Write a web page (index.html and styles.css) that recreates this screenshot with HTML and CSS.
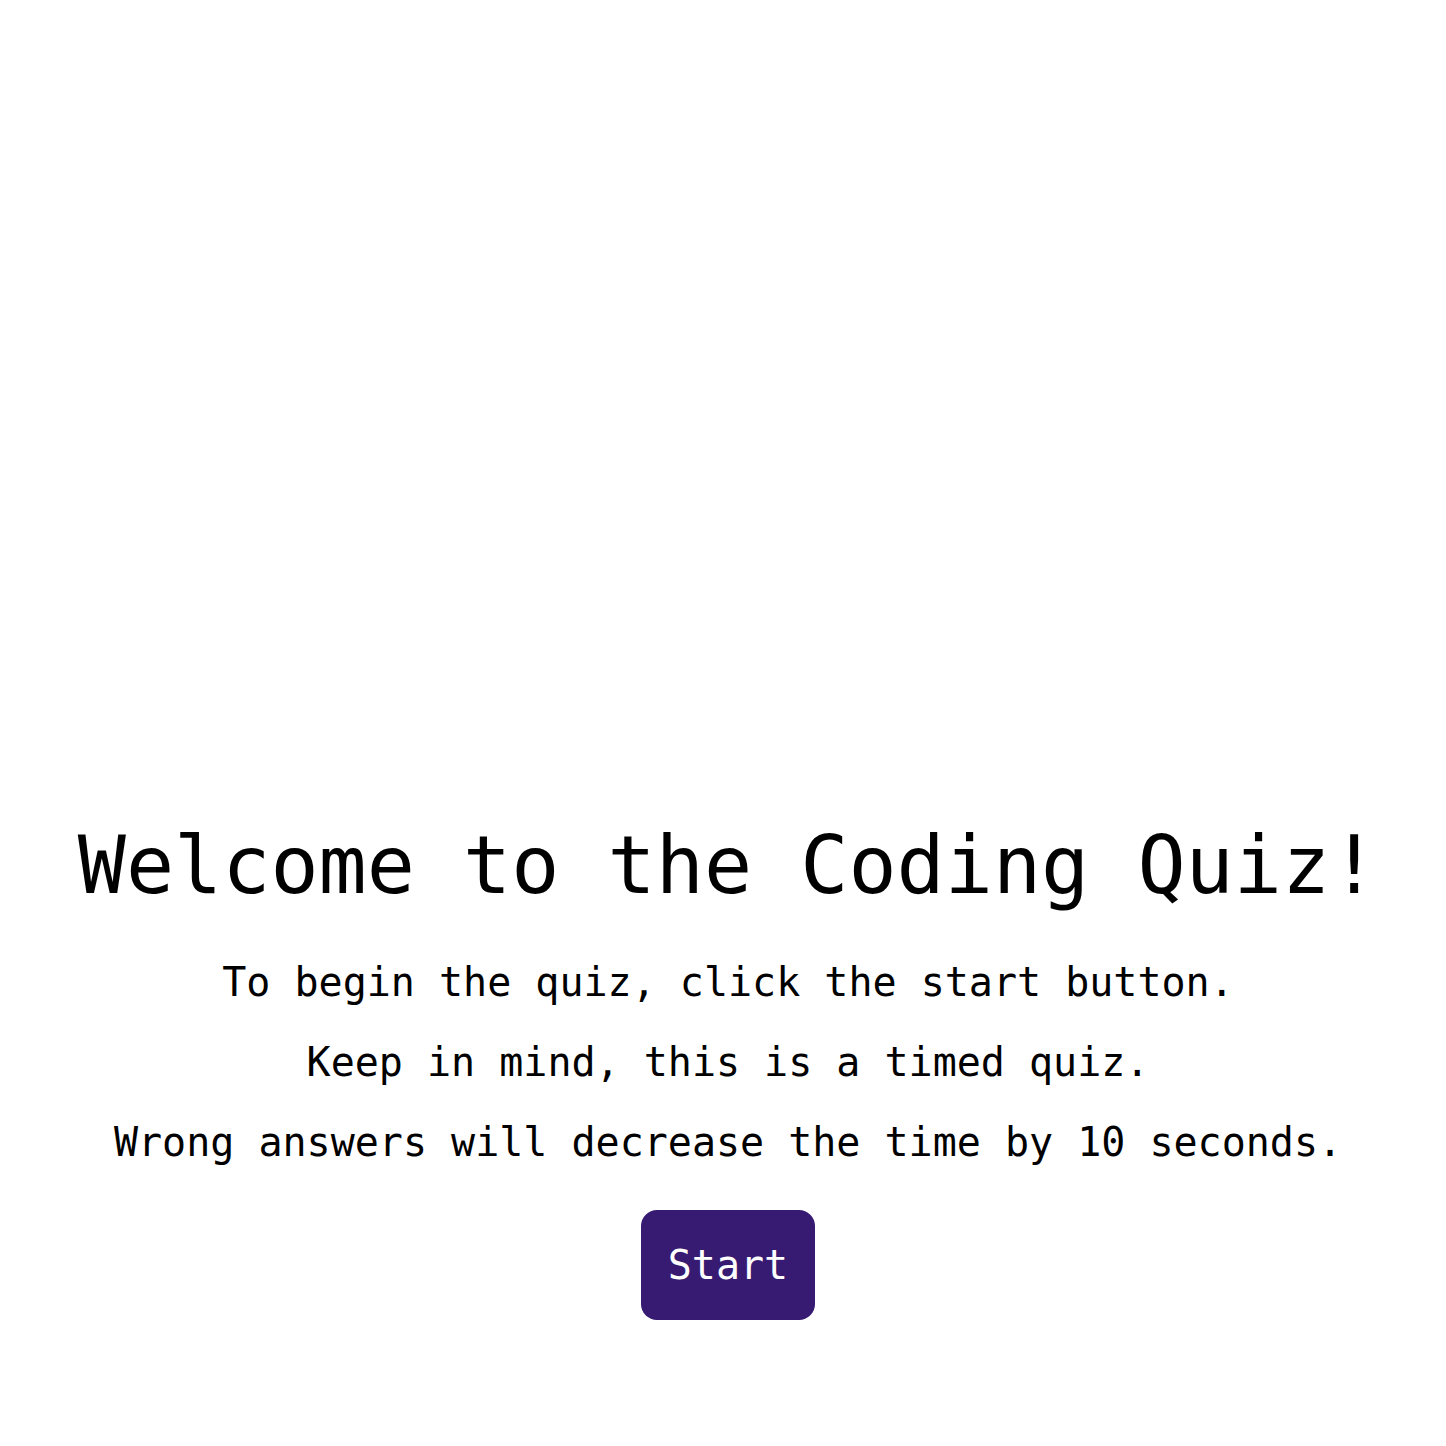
FILE: index.html
```html
<!DOCTYPE html>
<html lang="en">
<head>
<meta charset="utf-8">
<title>Coding Quiz</title>
<link rel="stylesheet" href="styles.css">
</head>
<body>
<main class="quiz">
  <h1 class="title">Welcome to the Coding Quiz!</h1>
  <p class="info">To begin the quiz, click the start button.</p>
  <p class="info">Keep in mind, this is a timed quiz.</p>
  <p class="info info-last">Wrong answers will decrease the time by 10 seconds.</p>
  <button class="start">Start</button>
</main>
</body>
</html>
```

FILE: styles.css
```css
html, body {
  margin: 0;
  padding: 0;
  background: #ffffff;
}
body {
  font-family: "DejaVu Sans Mono", monospace;
  color: #000000;
}
.quiz {
  display: flex;
  flex-direction: column;
  align-items: center;
  text-align: center;
  padding-top: 819px;
  padding-left: 10px;
}
.title {
  font-size: 80px;
  font-weight: normal;
  margin: 0 0 47px 0;
}
.info {
  font-size: 40px;
  margin: 0 0 34px 0;
}
.info-last {
  margin-bottom: 45px;
}
.start {
  font-family: "DejaVu Sans Mono", monospace;
  font-size: 40px;
  color: #ffffff;
  background: #371b73;
  border: none;
  border-radius: 16px;
  padding: 32px 27px;
  cursor: pointer;
}
```
